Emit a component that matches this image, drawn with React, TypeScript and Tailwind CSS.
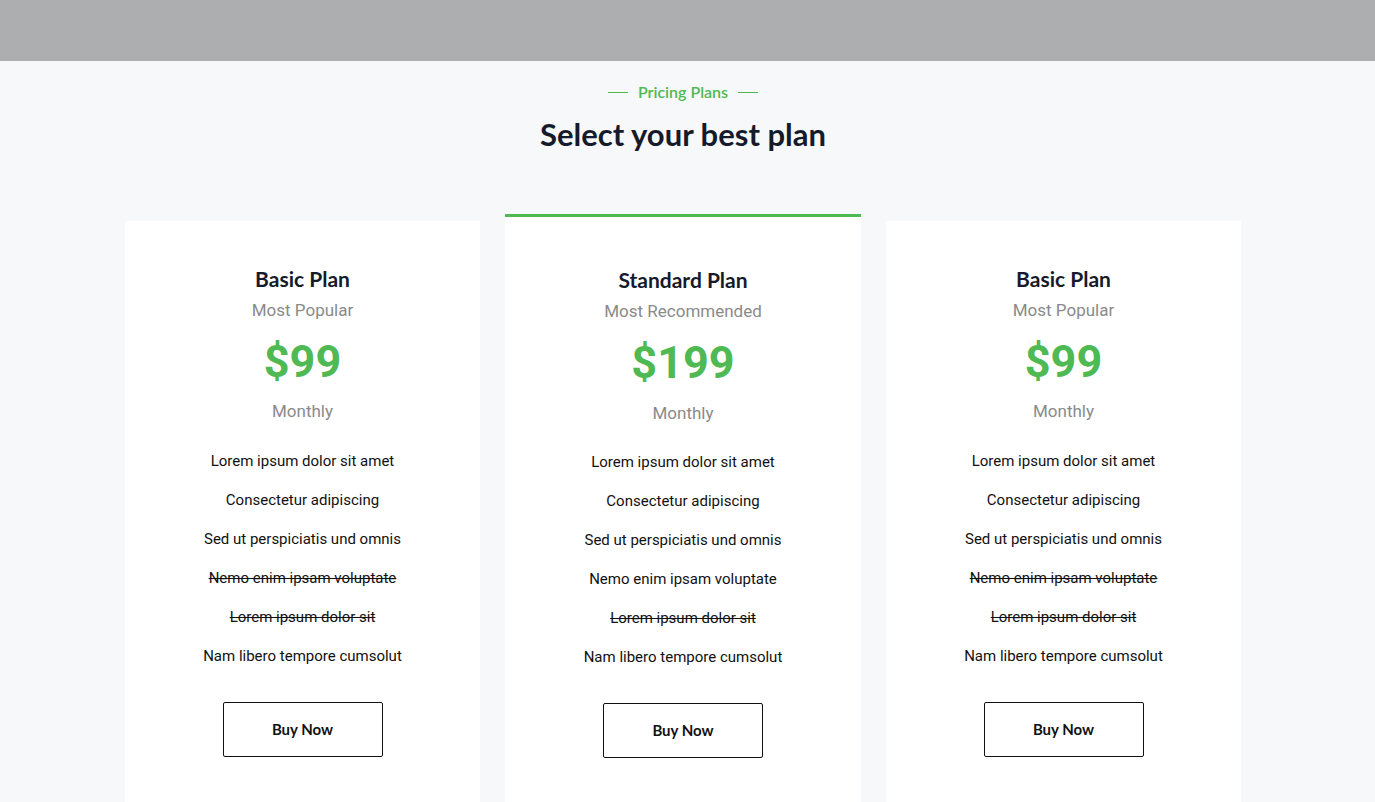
import React from "react";

type Feature = { text: string; struck?: boolean };

const sideFeatures: Feature[] = [
  { text: "Lorem ipsum dolor sit amet" },
  { text: "Consectetur adipiscing" },
  { text: "Sed ut perspiciatis und omnis" },
  { text: "Nemo enim ipsam voluptate", struck: true },
  { text: "Lorem ipsum dolor sit", struck: true },
  { text: "Nam libero tempore cumsolut" },
];

const midFeatures: Feature[] = [
  { text: "Lorem ipsum dolor sit amet" },
  { text: "Consectetur adipiscing" },
  { text: "Sed ut perspiciatis und omnis" },
  { text: "Nemo enim ipsam voluptate" },
  { text: "Lorem ipsum dolor sit", struck: true },
  { text: "Nam libero tempore cumsolut" },
];

function Card({
  title,
  sub,
  price,
  features,
  featured,
}: {
  title: string;
  sub: string;
  price: string;
  features: Feature[];
  featured?: boolean;
}) {
  return (
    <div
      className={
        featured
          ? "w-[356px] bg-white border-t-[3px] border-[#4fb953] pt-[49px] pb-[60px] flex flex-col items-center"
          : "w-[355px] mt-[7px] bg-white pt-[44px] pb-[60px] flex flex-col items-center"
      }
    >
      <h3 className="font-['Lato',sans-serif] font-bold text-[21px] leading-[28px] text-[#161b2b]">
        {title}
      </h3>
      <p className="mt-[5px] font-['Roboto',sans-serif] text-[17px] leading-[24px] text-[#8a8a8a]">
        {sub}
      </p>
      <p className="mt-[14px] font-['Roboto',sans-serif] font-bold text-[45px] leading-[52px] text-[#4fb953]">
        {price}
      </p>
      <p
        className={
          (featured ? "mt-[12px] " : "mt-[11px] ") +
          "font-['Roboto',sans-serif] text-[17px] leading-[24px] text-[#8a8a8a]"
        }
      >
        Monthly
      </p>
      <ul
        className={
          (featured ? "mt-[25px] " : "mt-[26px] ") +
          "flex flex-col items-center gap-[15px] font-['Roboto',sans-serif] text-[15px] leading-[24px] text-[#111111]"
        }
      >
        {features.map((f, i) => (
          <li key={i} className={f.struck ? "line-through" : ""}>
            {f.text}
          </li>
        ))}
      </ul>
      <button className="mt-[34px] w-[160px] h-[55px] border border-[#111111] rounded-[2px] bg-white font-['Lato',sans-serif] font-bold text-[15px] text-[#111111]">
        Buy Now
      </button>
    </div>
  );
}

export default function App() {
  return (
    <div className="min-h-[802px] bg-[#f7f8fa] overflow-hidden">
      <div className="h-[61px] bg-[#adaeb0]" />
      <div className="w-[1116px] ml-[125px] flex flex-col items-center">
        <div className="mt-[19px] flex items-center gap-[10px] h-[24px]">
          <span className="block w-[20px] h-px bg-[#4fb953]" />
          <span className="font-['Lato',sans-serif] font-semibold text-[16px] leading-[24px] text-[#4fb953]">
            Pricing Plans
          </span>
          <span className="block w-[20px] h-px bg-[#4fb953]" />
        </div>
        <h2 className="mt-[10px] font-['Lato',sans-serif] font-bold text-[31px] leading-[40px] text-[#161b2b]">
          Select your best plan
        </h2>
        <div className="mt-[60px] w-full flex items-start gap-[25px]">
          <Card title="Basic Plan" sub="Most Popular" price="$99" features={sideFeatures} />
          <Card
            title="Standard Plan"
            sub="Most Recommended"
            price="$199"
            features={midFeatures}
            featured
          />
          <Card title="Basic Plan" sub="Most Popular" price="$99" features={sideFeatures} />
        </div>
      </div>
    </div>
  );
}
